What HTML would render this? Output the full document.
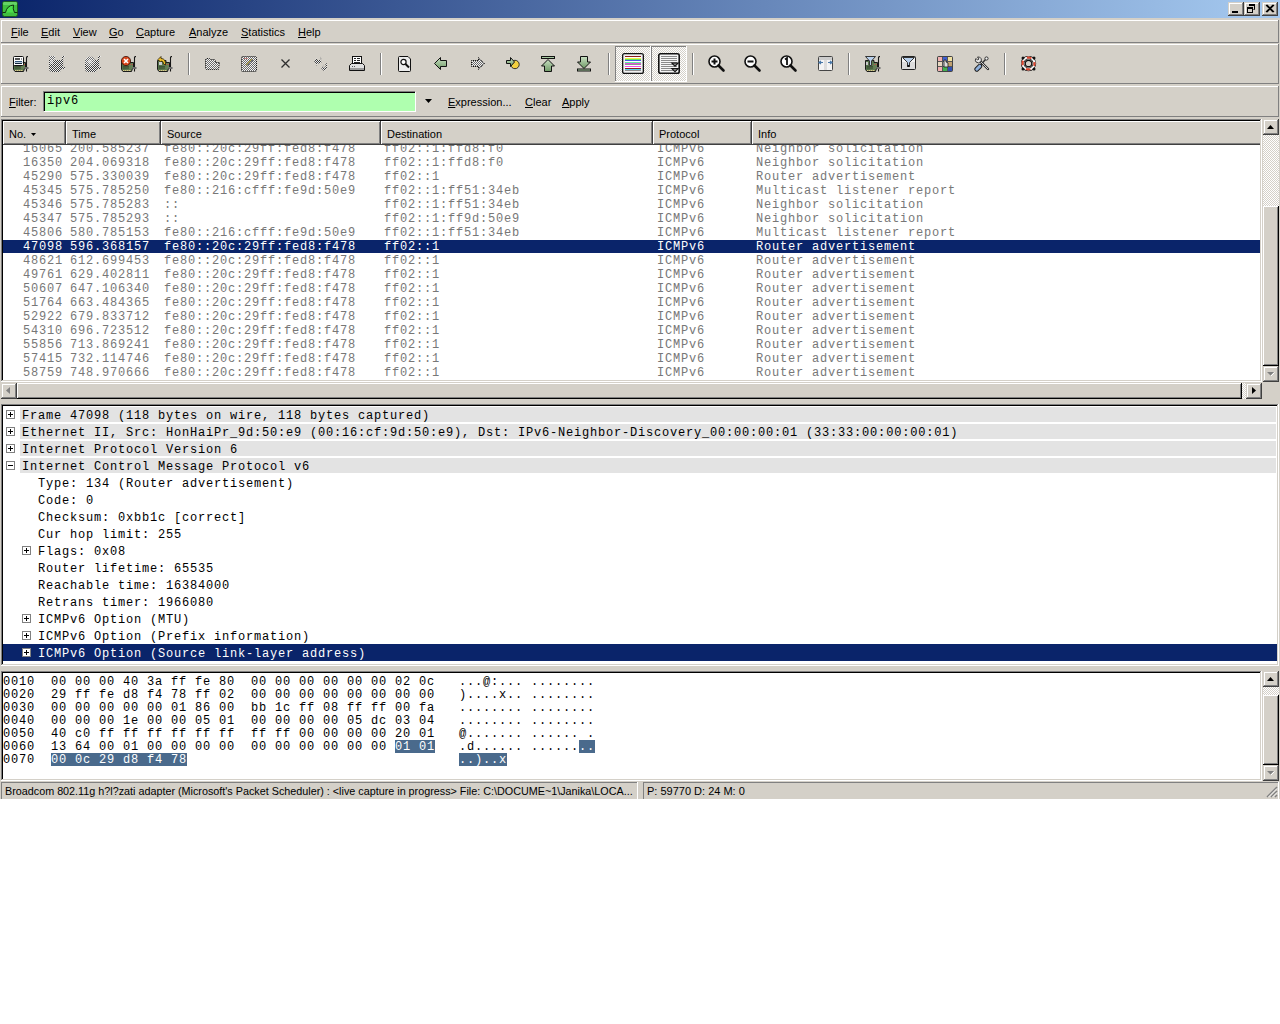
<!DOCTYPE html><html><head><meta charset="utf-8"><style>
*{margin:0;padding:0;box-sizing:border-box}
html,body{width:1280px;height:1024px;background:#fff;overflow:hidden;position:relative;font-family:"Liberation Sans",sans-serif;font-size:11px;color:#000}
div,span,svg{position:absolute}
.m{font-family:"Liberation Mono",monospace;font-size:12px;letter-spacing:0.8px;white-space:pre;line-height:14px}
.s{font-family:"Liberation Sans",sans-serif;font-size:11px;white-space:pre;line-height:13px}
.u{text-decoration:underline}
</style></head><body>
<div style="left:0px;top:18px;width:1280px;height:781px;background:#d4d0c8;"></div>
<div style="left:0px;top:0px;width:1280px;height:18px;background:linear-gradient(to right,#0a246a,#a6caf0);"></div>
<svg style="left:2px;top:1px" width="16" height="16" viewBox="0 0 16 16">
<rect x="0.5" y="0.5" width="15" height="15" rx="2" fill="#3fbf3f" stroke="#1d5a1d"/>
<rect x="1" y="1" width="14" height="3" rx="1" fill="#7fdf7f" opacity="0.6"/>
<path d="M0.5 11.5 H3.5 Q5 4.5 11.5 4 Q10.5 8 12.5 11.5 H15.5" fill="#4ae04a" stroke="#103010" stroke-width="1"/>
</svg>
<div style="left:1228px;top:2px;width:16px;height:14px;background:#d4d0c8;"></div>
<div style="left:1229px;top:3px;width:14px;height:1px;background:#fff;"></div>
<div style="left:1229px;top:3px;width:1px;height:12px;background:#fff;"></div>
<div style="left:1228px;top:15px;width:16px;height:1px;background:#404040;"></div>
<div style="left:1243px;top:2px;width:1px;height:14px;background:#404040;"></div>
<div style="left:1229px;top:14px;width:14px;height:1px;background:#808080;"></div>
<div style="left:1242px;top:3px;width:1px;height:12px;background:#808080;"></div>
<div style="left:1244px;top:2px;width:16px;height:14px;background:#d4d0c8;"></div>
<div style="left:1245px;top:3px;width:14px;height:1px;background:#fff;"></div>
<div style="left:1245px;top:3px;width:1px;height:12px;background:#fff;"></div>
<div style="left:1244px;top:15px;width:16px;height:1px;background:#404040;"></div>
<div style="left:1259px;top:2px;width:1px;height:14px;background:#404040;"></div>
<div style="left:1245px;top:14px;width:14px;height:1px;background:#808080;"></div>
<div style="left:1258px;top:3px;width:1px;height:12px;background:#808080;"></div>
<div style="left:1262px;top:2px;width:16px;height:14px;background:#d4d0c8;"></div>
<div style="left:1263px;top:3px;width:14px;height:1px;background:#fff;"></div>
<div style="left:1263px;top:3px;width:1px;height:12px;background:#fff;"></div>
<div style="left:1262px;top:15px;width:16px;height:1px;background:#404040;"></div>
<div style="left:1277px;top:2px;width:1px;height:14px;background:#404040;"></div>
<div style="left:1263px;top:14px;width:14px;height:1px;background:#808080;"></div>
<div style="left:1276px;top:3px;width:1px;height:12px;background:#808080;"></div>
<svg style="left:1228px;top:2px" width="16" height="14"><rect x="4" y="9" width="6" height="2" fill="#000"/></svg>
<svg style="left:1244px;top:2px" width="16" height="14"><path d="M5.5 2.5h5v5h-1" fill="none" stroke="#000"/><rect x="5" y="2" width="6" height="2" fill="#000"/><rect x="3.5" y="5.5" width="5" height="5" fill="none" stroke="#000"/><rect x="3" y="5" width="6" height="2" fill="#000"/></svg>
<svg style="left:1262px;top:2px" width="16" height="14"><path d="M4 3L11 10M5 3L12 10M11 3L4 10M12 3L5 10" stroke="#000" stroke-width="1.1"/></svg>
<div style="left:1px;top:20px;width:1278px;height:23px;background:#d4d0c8;"></div>
<div style="left:1px;top:20px;width:1278px;height:1px;background:#fff;"></div>
<div style="left:1px;top:20px;width:1px;height:23px;background:#fff;"></div>
<div style="left:1px;top:42px;width:1278px;height:1px;background:#808080;"></div>
<div style="left:1278px;top:20px;width:1px;height:23px;background:#808080;"></div>
<span class="s" style="left:11px;top:26px"><span class="u" style="position:static">F</span>ile</span>
<span class="s" style="left:41px;top:26px"><span class="u" style="position:static">E</span>dit</span>
<span class="s" style="left:73px;top:26px"><span class="u" style="position:static">V</span>iew</span>
<span class="s" style="left:109px;top:26px"><span class="u" style="position:static">G</span>o</span>
<span class="s" style="left:136px;top:26px"><span class="u" style="position:static">C</span>apture</span>
<span class="s" style="left:189px;top:26px"><span class="u" style="position:static">A</span>nalyze</span>
<span class="s" style="left:241px;top:26px"><span class="u" style="position:static">S</span>tatistics</span>
<span class="s" style="left:298px;top:26px"><span class="u" style="position:static">H</span>elp</span>
<div style="left:1px;top:44px;width:1278px;height:40px;background:#d4d0c8;"></div>
<div style="left:1px;top:44px;width:1278px;height:1px;background:#fff;"></div>
<div style="left:1px;top:44px;width:1px;height:40px;background:#fff;"></div>
<div style="left:1px;top:83px;width:1278px;height:1px;background:#808080;"></div>
<div style="left:1278px;top:44px;width:1px;height:40px;background:#808080;"></div>
<svg width="0" height="0" style="left:0;top:0"><defs>
<pattern id="dith" width="2" height="2" patternUnits="userSpaceOnUse"><rect width="2" height="2" fill="#ececec"/><rect width="1" height="1" fill="#3c3c3c"/><rect x="1" y="1" width="1" height="1" fill="#3c3c3c"/></pattern>
<pattern id="dithl" width="2" height="2" patternUnits="userSpaceOnUse"><rect width="2" height="2" fill="#f4f4f4"/><rect width="1" height="1" fill="#6a6a6a"/><rect x="1" y="1" width="1" height="1" fill="#6a6a6a"/></pattern>
<pattern id="press" width="2" height="2" patternUnits="userSpaceOnUse"><rect width="2" height="2" fill="#d4d0c8"/><rect width="1" height="1" fill="#fff"/><rect x="1" y="1" width="1" height="1" fill="#fff"/></pattern>
<linearGradient id="grn" x1="0" y1="0" x2="1" y2="0"><stop offset="0" stop-color="#4f6c45"/><stop offset="1" stop-color="#6a855a"/></linearGradient>
<linearGradient id="arr" x1="0" y1="0" x2="0" y2="1"><stop offset="0" stop-color="#c9e0c3"/><stop offset="1" stop-color="#6f9a66"/></linearGradient>
<linearGradient id="arrh" x1="0" y1="0" x2="1" y2="0"><stop offset="0" stop-color="#c9e0c3"/><stop offset="1" stop-color="#6f9a66"/></linearGradient>
<symbol id="card" viewBox="0 0 16 16">
<path d="M0.5 4.5V13.5L2 15.5H10.5L11.5 12.5H12.5V6.5H9V4.5Z" fill="url(#grn)" stroke="#1a1a1a"/>
<rect x="2" y="14" width="1.5" height="1" fill="#d8c98a"/><rect x="4" y="14" width="1.5" height="1" fill="#d8c98a"/><rect x="6" y="14" width="1.5" height="1" fill="#d8c98a"/><rect x="8" y="14" width="1.5" height="1" fill="#d8c98a"/>
<rect x="2" y="10" width="6" height="1" fill="#3e5437"/><rect x="2" y="11.5" width="6" height="1" fill="#34482f"/>
<rect x="9" y="8" width="1" height="1" fill="#c0504a"/><rect x="11" y="8" width="1" height="1" fill="#c0504a"/>
<path d="M13.5 15.5V1.5Q13.5 0.5 15 0.5" fill="none" stroke="#161616" stroke-width="1.1"/>
<rect x="11.5" y="11" width="4" height="2" fill="#6e6e6e"/>
</symbol>
<symbol id="cardsil" viewBox="0 0 16 16">
<path d="M0 4V14L2 16H11L12 13H16V11H14.2V1.2L16 1V0H13V4Z" />
</symbol>
</defs></svg>
<svg style="left:13px;top:56px" width="16" height="16" viewBox="0 0 16 16"><use href="#card" width="16" height="16"/>
<rect x="0.5" y="0.5" width="10" height="9" rx="1" fill="#fff" stroke="#111"/>
<rect x="2" y="2" width="5" height="2" fill="#555"/><rect x="8" y="2" width="1" height="2" fill="#999"/>
<rect x="2" y="5" width="7" height="1" fill="#34567a"/><rect x="2" y="7" width="7" height="1" fill="#12253a"/>
<rect x="1" y="6" width="9" height="1" fill="#b8c8d8"/></svg>
<svg style="left:49px;top:56px" width="16" height="16" viewBox="0 0 16 16"><use href="#cardsil" width="16" height="16" fill="url(#dith)"/><path d="M0 0H6V3L4 5H1Z" fill="url(#dithl)"/><rect x="1" y="4" width="3" height="4" fill="#f4f4f4" opacity="0.5"/></svg>
<svg style="left:85px;top:56px" width="16" height="16" viewBox="0 0 16 16"><use href="#cardsil" width="16" height="16" fill="url(#dith)"/><circle cx="5" cy="5.5" r="5" fill="url(#dithl)"/><circle cx="5" cy="5.5" r="2" fill="#f0f0f0" opacity="0.6"/></svg>
<svg style="left:121px;top:56px" width="16" height="16" viewBox="0 0 16 16"><use href="#card" width="16" height="16"/>
<circle cx="5" cy="5" r="4.6" fill="#d8461c" stroke="#3a1208" stroke-width="0.8"/>
<path d="M3 3L7 7M7 3L3 7" stroke="#fff" stroke-width="1.6"/>
</svg>
<svg style="left:157px;top:56px" width="16" height="16" viewBox="0 0 16 16"><use href="#card" width="16" height="16"/>
<path d="M1 3.5L4 0.5V2.5Q9 2.5 8.5 9L6.5 8Q6.5 5 4 5V6.5Z" fill="#f0bf2a" stroke="#2a2000" stroke-width="0.8"/>
<rect x="2" y="6" width="3" height="3" fill="#c8ccd0"/>
</svg>
<div style="left:188px;top:53px;width:1px;height:22px;background:#808080"></div>
<div style="left:189px;top:53px;width:1px;height:22px;background:#fff"></div>
<svg style="left:205px;top:58px" width="16" height="12" viewBox="0 0 16 12"><path d="M0.5 1.5L1.5 0.5H4.5L5.5 1.5H9.5L10.5 2.5V4.5H14.5L13.5 11.5H1.5L0.5 10.5Z" fill="url(#dithl)" stroke="#111" stroke-dasharray="1 1"/></svg>
<svg style="left:241px;top:56px" width="16" height="16" viewBox="0 0 16 16"><rect x="0.5" y="0.5" width="15" height="15" rx="1" fill="url(#dithl)" stroke="#111" stroke-dasharray="1 1"/>
<path d="M11 3L5 9" stroke="#c8b848" stroke-width="1"/><path d="M12 4L6 10" stroke="#333" stroke-width="1" stroke-dasharray="1 1"/><rect x="3" y="2" width="4" height="1" fill="#c08080"/></svg>
<svg style="left:281px;top:59px" width="9" height="9" viewBox="0 0 9 9"><path d="M0.5 0.5L8.5 8.5M8.5 0.5L0.5 8.5" stroke="#2f2f2f" stroke-width="1.3"/></svg>
<svg style="left:313px;top:56px" width="15" height="16" viewBox="0 0 15 16"><path d="M1 5L4 2V4H8L8.5 6.5L4 8V9Z" fill="url(#dith)"/><path d="M1.5 6L4 8.5L4 10Z" fill="url(#dith)"/><path d="M7 0.5L9 3L7 4Z" fill="#9a9a9a" opacity="0.6"/>
<path d="M14 12L11 15L8 12L9.5 11L11 12L13 10V6.5L14 8Z" fill="url(#dith)"/><path d="M12 7L14 9.5L13 11Z" fill="url(#dith)"/><path d="M9 11L11 8L10 12Z" fill="#9a9a9a" opacity="0.6"/></svg>
<svg style="left:349px;top:56px" width="17" height="16" viewBox="0 0 17 16"><rect x="3.5" y="0.5" width="9" height="8" fill="#fff" stroke="#111"/>
<rect x="5" y="2" width="2" height="1" fill="#222"/><rect x="8" y="2" width="3" height="1" fill="#222"/><rect x="5" y="4" width="2" height="1" fill="#222"/><rect x="8" y="4" width="3" height="1" fill="#222"/><rect x="5" y="6" width="6" height="1" fill="#222"/>
<path d="M0.5 9.5L2.5 7.5H13.5L15.5 9.5V14.5H0.5Z" fill="#e0e0e0" stroke="#111"/>
<rect x="1" y="12" width="14" height="2" fill="#9a9a9a"/><rect x="3" y="10" width="1" height="1" fill="#555"/><rect x="5" y="10" width="1" height="1" fill="#555"/></svg>
<div style="left:380px;top:53px;width:1px;height:22px;background:#808080"></div>
<div style="left:381px;top:53px;width:1px;height:22px;background:#fff"></div>
<svg style="left:398px;top:56px" width="14" height="16" viewBox="0 0 14 16"><path d="M0.5 1.5Q0.5 0.5 1.5 0.5H10L12.5 3V14.5Q12.5 15.5 11.5 15.5H1.5Q0.5 15.5 0.5 14.5Z" fill="#ececec" stroke="#111"/>
<circle cx="5.5" cy="6" r="2.6" fill="#fff" stroke="#111" stroke-width="1.2"/><path d="M7.5 8L11 11.5" stroke="#111" stroke-width="2"/></svg>
<svg style="left:434px;top:57px" width="14" height="13" viewBox="0 0 14 13"><path d="M0.5 6.5L6.5 0.5V3.5H12.5V9.5H6.5V12.5Z" fill="url(#arr)" stroke="#111"/></svg>
<svg style="left:471px;top:57px" width="14" height="13" viewBox="0 0 14 13"><path d="M13.5 6.5L7.5 0.5V3.5H0.5V9.5H7.5V12.5Z" fill="url(#dithl)" stroke="#111" stroke-dasharray="1 1"/></svg>
<svg style="left:506px;top:57px" width="14" height="13" viewBox="0 0 14 13"><circle cx="9" cy="7.5" r="4.2" fill="#f4d040" stroke="#222" stroke-width="0.9"/>
<path d="M0.5 3.5H4.5V0.5L8.5 5L4.5 9.5V6.5H0.5Z" fill="url(#arr)" stroke="#111"/></svg>
<svg style="left:541px;top:56px" width="15" height="16" viewBox="0 0 15 16"><rect x="0.5" y="0.5" width="13" height="2" fill="#a7c9a0" stroke="#111"/>
<path d="M7 3.5L13.5 10H10.5V15.5H3.5V10H0.5Z" fill="url(#arr)" stroke="#111"/></svg>
<svg style="left:577px;top:56px" width="15" height="16" viewBox="0 0 15 16"><rect x="0.5" y="13" width="13" height="2" fill="#a7c9a0" stroke="#111"/>
<path d="M7 12.5L13.5 6H10.5V0.5H3.5V6H0.5Z" fill="url(#arr)" stroke="#111"/></svg>
<div style="left:608px;top:53px;width:1px;height:22px;background:#808080"></div>
<div style="left:609px;top:53px;width:1px;height:22px;background:#fff"></div>
<svg style="left:615px;top:46px" width="36" height="36" viewBox="0 0 36 36"><rect width="36" height="36" fill="url(#press)"/><rect width="36" height="1" fill="#808080"/><rect width="1" height="36" fill="#808080"/><rect y="35" width="36" height="1" fill="#fff"/><rect x="35" width="1" height="36" fill="#fff"/></svg>
<svg style="left:651px;top:46px" width="36" height="36" viewBox="0 0 36 36"><rect width="36" height="36" fill="url(#press)"/><rect width="36" height="1" fill="#808080"/><rect width="1" height="36" fill="#808080"/><rect y="35" width="36" height="1" fill="#fff"/><rect x="35" width="1" height="36" fill="#fff"/></svg>
<svg style="left:622px;top:53px" width="22" height="21" viewBox="0 0 22 21"><rect x="0.8" y="0.8" width="20.4" height="19.4" rx="1.8" fill="#fff" stroke="#111" stroke-width="1.6"/><rect x="2" y="2" width="18" height="17" fill="none" stroke="#e4e4e4" stroke-width="1"/><rect x="3" y="3" width="16" height="1" fill="#8c1c1c"/><rect x="3" y="5" width="16" height="1" fill="#f0f040"/><rect x="3" y="6" width="16" height="1" fill="#60e060"/><rect x="3" y="7" width="16" height="1" fill="#4a5ae0"/><rect x="3" y="9" width="16" height="1" fill="#60f0a0"/><rect x="3" y="10" width="16" height="1" fill="#e050e0"/><rect x="3" y="11" width="16" height="1" fill="#909090"/><rect x="3" y="13" width="16" height="1" fill="#f050f0"/><rect x="3" y="15" width="16" height="1" fill="#8c1c1c"/><rect x="3" y="16" width="16" height="1" fill="#50d0f0"/><rect x="3" y="17" width="16" height="1" fill="#909090"/></svg>
<svg style="left:658px;top:53px" width="22" height="21" viewBox="0 0 22 21"><rect x="0.8" y="0.8" width="20.4" height="19.4" rx="1.8" fill="#f6f6f6" stroke="#111" stroke-width="1.6"/><rect x="3" y="3" width="16" height="1" fill="#8a8a8a"/><rect x="3" y="5" width="16" height="1" fill="#8a8a8a"/><rect x="3" y="7" width="16" height="1" fill="#8a8a8a"/><rect x="3" y="9" width="16" height="1" fill="#8a8a8a"/><rect x="3" y="11" width="16" height="1" fill="#8a8a8a"/><rect x="3" y="13" width="16" height="1" fill="#8a8a8a"/><rect x="3" y="15" width="16" height="1" fill="#8a8a8a"/><rect x="3" y="17" width="16" height="1" fill="#8a8a8a"/><path d="M12.5 9.5H21.5L17 14Z" fill="#111"/><path d="M12.5 15H21.5L17 19.5Z" fill="#111"/><path d="M15 10.5H19L17 12.5Z" fill="#888"/><path d="M15 16H19L17 18Z" fill="#888"/></svg>
<div style="left:692px;top:53px;width:1px;height:22px;background:#808080"></div>
<div style="left:693px;top:53px;width:1px;height:22px;background:#fff"></div>
<svg style="left:708px;top:55px" width="18" height="18" viewBox="0 0 18 18"><circle cx="6.5" cy="6.5" r="5.5" fill="#fff" stroke="#111" stroke-width="1.6"/>
<path d="M10.5 10.5L15.5 15.5" stroke="#111" stroke-width="2.6" stroke-linecap="round"/><path d="M6.5 3.5V9.5M3.5 6.5H9.5" stroke="#111" stroke-width="2"/></svg>
<svg style="left:744px;top:55px" width="18" height="18" viewBox="0 0 18 18"><circle cx="6.5" cy="6.5" r="5.5" fill="#fff" stroke="#111" stroke-width="1.6"/>
<path d="M10.5 10.5L15.5 15.5" stroke="#111" stroke-width="2.6" stroke-linecap="round"/><path d="M3.5 6.5H9.5" stroke="#111" stroke-width="2"/></svg>
<svg style="left:780px;top:55px" width="18" height="18" viewBox="0 0 18 18"><circle cx="6.5" cy="6.5" r="5.5" fill="#fff" stroke="#111" stroke-width="1.6"/>
<path d="M10.5 10.5L15.5 15.5" stroke="#111" stroke-width="2.6" stroke-linecap="round"/><path d="M5 4.5L7 3V10" fill="none" stroke="#111" stroke-width="1.8"/></svg>
<svg style="left:818px;top:56px" width="15" height="15" viewBox="0 0 15 15"><rect x="0.5" y="0.5" width="14" height="14" rx="1" fill="#f4f4f4" stroke="#444"/>
<rect x="1" y="1" width="13" height="3" fill="#ccc"/><rect x="6" y="4" width="3" height="10" fill="#ddd"/>
<path d="M1 6.5H5M3 5L1 6.5L3 8M10 6.5H14M12 5L14 6.5L12 8" stroke="#4a78a8" stroke-width="1.2" fill="none"/></svg>
<div style="left:848px;top:53px;width:1px;height:22px;background:#808080"></div>
<div style="left:849px;top:53px;width:1px;height:22px;background:#fff"></div>
<svg style="left:865px;top:56px" width="16" height="16" viewBox="0 0 16 16"><use href="#card" width="16" height="16"/>
<path d="M0.5 0.5H10.5L6.5 5V9.5H4.5V5Z" fill="#b8d0ec" stroke="#333"/>
<rect x="1" y="6" width="2" height="3" fill="#c8c8c8"/></svg>
<svg style="left:901px;top:56px" width="15" height="15" viewBox="0 0 15 15"><rect x="0.5" y="0.5" width="14" height="13" rx="1" fill="#dcdcdc" stroke="#222"/>
<rect x="1" y="1" width="13" height="5" fill="#f4f4f4"/>
<path d="M1.5 1.5H13.5L8.5 6.5V10.5H6.5V6.5Z" fill="#b8d0ec" stroke="#333"/><rect x="6.5" y="9" width="2" height="2" fill="#111"/></svg>
<svg style="left:937px;top:56px" width="16" height="16" viewBox="0 0 16 16"><rect x="0.5" y="0.5" width="15" height="15" rx="1" fill="#555" stroke="#444"/>
<rect x="1" y="1" width="4" height="4" fill="#f0b0b0"/><rect x="6" y="1" width="4" height="4" fill="#4060d0"/><rect x="11" y="1" width="4" height="4" fill="#f0e0a0"/>
<rect x="1" y="6" width="4" height="4" fill="#e8d8c0"/><rect x="6" y="6" width="4" height="4" fill="#c0c0c0"/><rect x="11" y="6" width="4" height="4" fill="#c0a070"/>
<rect x="1" y="11" width="4" height="4" fill="#f0b0b0"/><rect x="6" y="11" width="4" height="4" fill="#40b050"/><rect x="11" y="11" width="4" height="4" fill="#3050b0"/>
<path d="M7 4V11H11V7L9 6V4Z" fill="#ddd" stroke="#222" stroke-width="0.8"/></svg>
<svg style="left:974px;top:56px" width="16" height="16" viewBox="0 0 16 16"><path d="M6 9.5L11.5 3.5" stroke="#333" stroke-width="1.4"/><circle cx="12.5" cy="2.5" r="1.6" fill="#eee" stroke="#333" stroke-width="1"/>
<path d="M14 13L6 5" stroke="#2a2a2a" stroke-width="2.4" stroke-linecap="round"/><path d="M14 13L6 5" stroke="#e0e0e0" stroke-width="0.9"/>
<path d="M7 5.5Q4.5 8 2 6Q0.5 4 2 2.5L3.5 4L5 3L3.5 1Q6 0.5 7 2.5Q7.8 4 7 5.5Z" fill="#e8e8e8" stroke="#2a2a2a" stroke-width="0.9"/>
<path d="M2.8 13.2L5.8 10.2" stroke="#1a1a1a" stroke-width="4.8" stroke-linecap="round"/><path d="M2.8 13.2L5.8 10.2" stroke="#8fb0dc" stroke-width="3" stroke-linecap="round"/></svg>
<div style="left:1004px;top:53px;width:1px;height:22px;background:#808080"></div>
<div style="left:1005px;top:53px;width:1px;height:22px;background:#fff"></div>
<svg style="left:1021px;top:56px" width="16" height="16" viewBox="0 0 16 16"><circle cx="7.5" cy="7.5" r="6" fill="none" stroke="#111" stroke-width="3.4"/>
<circle cx="7.5" cy="7.5" r="6" fill="none" stroke="#fff" stroke-width="2"/>
<circle cx="7.5" cy="7.5" r="6" fill="none" stroke="#e04830" stroke-width="2" stroke-dasharray="4.7 4.7" stroke-dashoffset="2.3"/>
<circle cx="7.5" cy="7.5" r="3.2" fill="none" stroke="#111" stroke-width="1.2"/>
<circle cx="2" cy="2" r="1.5" fill="#111"/><circle cx="13" cy="2" r="1.5" fill="#111"/><circle cx="2" cy="13" r="1.5" fill="#111"/><circle cx="13" cy="13" r="1.5" fill="#111"/></svg>
<div style="left:1px;top:86px;width:1278px;height:31px;background:#d4d0c8;"></div>
<div style="left:1px;top:86px;width:1278px;height:1px;background:#fff;"></div>
<div style="left:1px;top:86px;width:1px;height:31px;background:#fff;"></div>
<div style="left:1px;top:116px;width:1278px;height:1px;background:#808080;"></div>
<div style="left:1278px;top:86px;width:1px;height:31px;background:#808080;"></div>
<span class="s" style="left:9px;top:96px"><span class="u" style="position:static">F</span>ilter:</span>
<div style="left:43px;top:91px;width:373px;height:21px;background:#d4d0c8;"></div>
<div style="left:43px;top:91px;width:372px;height:1px;background:#808080;"></div>
<div style="left:43px;top:91px;width:1px;height:20px;background:#808080;"></div>
<div style="left:44px;top:92px;width:371px;height:1px;background:#000;"></div>
<div style="left:44px;top:92px;width:1px;height:19px;background:#000;"></div>
<div style="left:45px;top:93px;width:370px;height:18px;background:#afffaf;"></div>
<div style="left:44px;top:111px;width:372px;height:1px;background:#fff;"></div>
<div style="left:415px;top:92px;width:1px;height:20px;background:#fff;"></div>
<span class="m" style="left:47px;top:94px;color:#000;">ipv6</span>
<svg style="left:425px;top:99px" width="7" height="4"><path d="M0 0H7L3.5 4Z" fill="#000"/></svg>
<span class="s" style="left:448px;top:96px"><span class="u" style="position:static">E</span>xpression...</span>
<span class="s" style="left:525px;top:96px"><span class="u" style="position:static">C</span>lear</span>
<span class="s" style="left:562px;top:96px"><span class="u" style="position:static">A</span>pply</span>
<div style="left:1px;top:119px;width:1261px;height:263px;background:#fff;"></div>
<div style="left:1px;top:119px;width:1261px;height:1px;background:#808080;"></div>
<div style="left:1px;top:119px;width:1px;height:263px;background:#808080;"></div>
<div style="left:2px;top:120px;width:1259px;height:1px;background:#000;"></div>
<div style="left:2px;top:120px;width:1px;height:261px;background:#000;"></div>
<div style="left:1px;top:381px;width:1261px;height:1px;background:#fff;"></div>
<div style="left:1261px;top:119px;width:1px;height:263px;background:#fff;"></div>
<div style="left:2px;top:380px;width:1259px;height:1px;background:#d4d0c8;"></div>
<div style="left:1260px;top:120px;width:1px;height:261px;background:#d4d0c8;"></div>
<div style="left:3px;top:121px;width:63px;height:24px;background:#d4d0c8;"></div>
<div style="left:3px;top:121px;width:63px;height:1px;background:#fff;"></div>
<div style="left:3px;top:121px;width:1px;height:24px;background:#fff;"></div>
<div style="left:3px;top:144px;width:63px;height:1px;background:#404040;"></div>
<div style="left:65px;top:121px;width:1px;height:24px;background:#404040;"></div>
<div style="left:4px;top:143px;width:61px;height:1px;background:#808080;"></div>
<div style="left:64px;top:122px;width:1px;height:22px;background:#808080;"></div>
<div style="left:66px;top:121px;width:95px;height:24px;background:#d4d0c8;"></div>
<div style="left:66px;top:121px;width:95px;height:1px;background:#fff;"></div>
<div style="left:66px;top:121px;width:1px;height:24px;background:#fff;"></div>
<div style="left:66px;top:144px;width:95px;height:1px;background:#404040;"></div>
<div style="left:160px;top:121px;width:1px;height:24px;background:#404040;"></div>
<div style="left:67px;top:143px;width:93px;height:1px;background:#808080;"></div>
<div style="left:159px;top:122px;width:1px;height:22px;background:#808080;"></div>
<div style="left:161px;top:121px;width:220px;height:24px;background:#d4d0c8;"></div>
<div style="left:161px;top:121px;width:220px;height:1px;background:#fff;"></div>
<div style="left:161px;top:121px;width:1px;height:24px;background:#fff;"></div>
<div style="left:161px;top:144px;width:220px;height:1px;background:#404040;"></div>
<div style="left:380px;top:121px;width:1px;height:24px;background:#404040;"></div>
<div style="left:162px;top:143px;width:218px;height:1px;background:#808080;"></div>
<div style="left:379px;top:122px;width:1px;height:22px;background:#808080;"></div>
<div style="left:381px;top:121px;width:272px;height:24px;background:#d4d0c8;"></div>
<div style="left:381px;top:121px;width:272px;height:1px;background:#fff;"></div>
<div style="left:381px;top:121px;width:1px;height:24px;background:#fff;"></div>
<div style="left:381px;top:144px;width:272px;height:1px;background:#404040;"></div>
<div style="left:652px;top:121px;width:1px;height:24px;background:#404040;"></div>
<div style="left:382px;top:143px;width:270px;height:1px;background:#808080;"></div>
<div style="left:651px;top:122px;width:1px;height:22px;background:#808080;"></div>
<div style="left:653px;top:121px;width:99px;height:24px;background:#d4d0c8;"></div>
<div style="left:653px;top:121px;width:99px;height:1px;background:#fff;"></div>
<div style="left:653px;top:121px;width:1px;height:24px;background:#fff;"></div>
<div style="left:653px;top:144px;width:99px;height:1px;background:#404040;"></div>
<div style="left:751px;top:121px;width:1px;height:24px;background:#404040;"></div>
<div style="left:654px;top:143px;width:97px;height:1px;background:#808080;"></div>
<div style="left:750px;top:122px;width:1px;height:22px;background:#808080;"></div>
<div style="left:752px;top:121px;width:508px;height:24px;overflow:hidden">

<div style="left:0px;top:0px;width:520px;height:24px;background:#d4d0c8;"></div>
<div style="left:0px;top:0px;width:520px;height:1px;background:#fff;"></div>
<div style="left:0px;top:0px;width:1px;height:24px;background:#fff;"></div>
<div style="left:0px;top:23px;width:520px;height:1px;background:#404040;"></div>
<div style="left:1px;top:22px;width:519px;height:1px;background:#808080;"></div>
</div>
<span class="s" style="left:9px;top:128px;color:#000;">No.</span>
<span class="s" style="left:72px;top:128px;color:#000;">Time</span>
<span class="s" style="left:167px;top:128px;color:#000;">Source</span>
<span class="s" style="left:387px;top:128px;color:#000;">Destination</span>
<span class="s" style="left:659px;top:128px;color:#000;">Protocol</span>
<span class="s" style="left:758px;top:128px;color:#000;">Info</span>
<svg style="left:31px;top:133px" width="5" height="3"><path d="M0 0H5L2.5 3Z" fill="#000"/></svg>
<div style="left:3px;top:145px;width:1257px;height:235px;overflow:hidden">
<span class="m" style="left:20px;top:-3px;color:#777;">16065</span>
<span class="m" style="left:67px;top:-3px;color:#777;">200.585237</span>
<span class="m" style="left:161px;top:-3px;color:#777;">fe80::20c:29ff:fed8:f478</span>
<span class="m" style="left:381px;top:-3px;color:#777;">ff02::1:ffd8:f0</span>
<span class="m" style="left:654px;top:-3px;color:#777;">ICMPv6</span>
<span class="m" style="left:753px;top:-3px;color:#777;">Neighbor solicitation</span>
<span class="m" style="left:20px;top:11px;color:#777;">16350</span>
<span class="m" style="left:67px;top:11px;color:#777;">204.069318</span>
<span class="m" style="left:161px;top:11px;color:#777;">fe80::20c:29ff:fed8:f478</span>
<span class="m" style="left:381px;top:11px;color:#777;">ff02::1:ffd8:f0</span>
<span class="m" style="left:654px;top:11px;color:#777;">ICMPv6</span>
<span class="m" style="left:753px;top:11px;color:#777;">Neighbor solicitation</span>
<span class="m" style="left:20px;top:25px;color:#777;">45290</span>
<span class="m" style="left:67px;top:25px;color:#777;">575.330039</span>
<span class="m" style="left:161px;top:25px;color:#777;">fe80::20c:29ff:fed8:f478</span>
<span class="m" style="left:381px;top:25px;color:#777;">ff02::1</span>
<span class="m" style="left:654px;top:25px;color:#777;">ICMPv6</span>
<span class="m" style="left:753px;top:25px;color:#777;">Router advertisement</span>
<span class="m" style="left:20px;top:39px;color:#777;">45345</span>
<span class="m" style="left:67px;top:39px;color:#777;">575.785250</span>
<span class="m" style="left:161px;top:39px;color:#777;">fe80::216:cfff:fe9d:50e9</span>
<span class="m" style="left:381px;top:39px;color:#777;">ff02::1:ff51:34eb</span>
<span class="m" style="left:654px;top:39px;color:#777;">ICMPv6</span>
<span class="m" style="left:753px;top:39px;color:#777;">Multicast listener report</span>
<span class="m" style="left:20px;top:53px;color:#777;">45346</span>
<span class="m" style="left:67px;top:53px;color:#777;">575.785283</span>
<span class="m" style="left:161px;top:53px;color:#777;">::</span>
<span class="m" style="left:381px;top:53px;color:#777;">ff02::1:ff51:34eb</span>
<span class="m" style="left:654px;top:53px;color:#777;">ICMPv6</span>
<span class="m" style="left:753px;top:53px;color:#777;">Neighbor solicitation</span>
<span class="m" style="left:20px;top:67px;color:#777;">45347</span>
<span class="m" style="left:67px;top:67px;color:#777;">575.785293</span>
<span class="m" style="left:161px;top:67px;color:#777;">::</span>
<span class="m" style="left:381px;top:67px;color:#777;">ff02::1:ff9d:50e9</span>
<span class="m" style="left:654px;top:67px;color:#777;">ICMPv6</span>
<span class="m" style="left:753px;top:67px;color:#777;">Neighbor solicitation</span>
<span class="m" style="left:20px;top:81px;color:#777;">45806</span>
<span class="m" style="left:67px;top:81px;color:#777;">580.785153</span>
<span class="m" style="left:161px;top:81px;color:#777;">fe80::216:cfff:fe9d:50e9</span>
<span class="m" style="left:381px;top:81px;color:#777;">ff02::1:ff51:34eb</span>
<span class="m" style="left:654px;top:81px;color:#777;">ICMPv6</span>
<span class="m" style="left:753px;top:81px;color:#777;">Multicast listener report</span>
<div style="left:0px;top:95px;width:1257px;height:13px;background:#0a246a;"></div>
<span class="m" style="left:20px;top:95px;color:#fff;">47098</span>
<span class="m" style="left:67px;top:95px;color:#fff;">596.368157</span>
<span class="m" style="left:161px;top:95px;color:#fff;">fe80::20c:29ff:fed8:f478</span>
<span class="m" style="left:381px;top:95px;color:#fff;">ff02::1</span>
<span class="m" style="left:654px;top:95px;color:#fff;">ICMPv6</span>
<span class="m" style="left:753px;top:95px;color:#fff;">Router advertisement</span>
<span class="m" style="left:20px;top:109px;color:#777;">48621</span>
<span class="m" style="left:67px;top:109px;color:#777;">612.699453</span>
<span class="m" style="left:161px;top:109px;color:#777;">fe80::20c:29ff:fed8:f478</span>
<span class="m" style="left:381px;top:109px;color:#777;">ff02::1</span>
<span class="m" style="left:654px;top:109px;color:#777;">ICMPv6</span>
<span class="m" style="left:753px;top:109px;color:#777;">Router advertisement</span>
<span class="m" style="left:20px;top:123px;color:#777;">49761</span>
<span class="m" style="left:67px;top:123px;color:#777;">629.402811</span>
<span class="m" style="left:161px;top:123px;color:#777;">fe80::20c:29ff:fed8:f478</span>
<span class="m" style="left:381px;top:123px;color:#777;">ff02::1</span>
<span class="m" style="left:654px;top:123px;color:#777;">ICMPv6</span>
<span class="m" style="left:753px;top:123px;color:#777;">Router advertisement</span>
<span class="m" style="left:20px;top:137px;color:#777;">50607</span>
<span class="m" style="left:67px;top:137px;color:#777;">647.106340</span>
<span class="m" style="left:161px;top:137px;color:#777;">fe80::20c:29ff:fed8:f478</span>
<span class="m" style="left:381px;top:137px;color:#777;">ff02::1</span>
<span class="m" style="left:654px;top:137px;color:#777;">ICMPv6</span>
<span class="m" style="left:753px;top:137px;color:#777;">Router advertisement</span>
<span class="m" style="left:20px;top:151px;color:#777;">51764</span>
<span class="m" style="left:67px;top:151px;color:#777;">663.484365</span>
<span class="m" style="left:161px;top:151px;color:#777;">fe80::20c:29ff:fed8:f478</span>
<span class="m" style="left:381px;top:151px;color:#777;">ff02::1</span>
<span class="m" style="left:654px;top:151px;color:#777;">ICMPv6</span>
<span class="m" style="left:753px;top:151px;color:#777;">Router advertisement</span>
<span class="m" style="left:20px;top:165px;color:#777;">52922</span>
<span class="m" style="left:67px;top:165px;color:#777;">679.833712</span>
<span class="m" style="left:161px;top:165px;color:#777;">fe80::20c:29ff:fed8:f478</span>
<span class="m" style="left:381px;top:165px;color:#777;">ff02::1</span>
<span class="m" style="left:654px;top:165px;color:#777;">ICMPv6</span>
<span class="m" style="left:753px;top:165px;color:#777;">Router advertisement</span>
<span class="m" style="left:20px;top:179px;color:#777;">54310</span>
<span class="m" style="left:67px;top:179px;color:#777;">696.723512</span>
<span class="m" style="left:161px;top:179px;color:#777;">fe80::20c:29ff:fed8:f478</span>
<span class="m" style="left:381px;top:179px;color:#777;">ff02::1</span>
<span class="m" style="left:654px;top:179px;color:#777;">ICMPv6</span>
<span class="m" style="left:753px;top:179px;color:#777;">Router advertisement</span>
<span class="m" style="left:20px;top:193px;color:#777;">55856</span>
<span class="m" style="left:67px;top:193px;color:#777;">713.869241</span>
<span class="m" style="left:161px;top:193px;color:#777;">fe80::20c:29ff:fed8:f478</span>
<span class="m" style="left:381px;top:193px;color:#777;">ff02::1</span>
<span class="m" style="left:654px;top:193px;color:#777;">ICMPv6</span>
<span class="m" style="left:753px;top:193px;color:#777;">Router advertisement</span>
<span class="m" style="left:20px;top:207px;color:#777;">57415</span>
<span class="m" style="left:67px;top:207px;color:#777;">732.114746</span>
<span class="m" style="left:161px;top:207px;color:#777;">fe80::20c:29ff:fed8:f478</span>
<span class="m" style="left:381px;top:207px;color:#777;">ff02::1</span>
<span class="m" style="left:654px;top:207px;color:#777;">ICMPv6</span>
<span class="m" style="left:753px;top:207px;color:#777;">Router advertisement</span>
<span class="m" style="left:20px;top:221px;color:#777;">58759</span>
<span class="m" style="left:67px;top:221px;color:#777;">748.970666</span>
<span class="m" style="left:161px;top:221px;color:#777;">fe80::20c:29ff:fed8:f478</span>
<span class="m" style="left:381px;top:221px;color:#777;">ff02::1</span>
<span class="m" style="left:654px;top:221px;color:#777;">ICMPv6</span>
<span class="m" style="left:753px;top:221px;color:#777;">Router advertisement</span>
</div>
<div style="left:1263px;top:119px;width:16px;height:263px;background:repeating-conic-gradient(#fff 0 25%,#d4d0c8 0 50%) 0 0/2px 2px;"></div>
<div style="left:1263px;top:119px;width:16px;height:16px;background:#d4d0c8;"></div>
<div style="left:1264px;top:120px;width:14px;height:1px;background:#fff;"></div>
<div style="left:1264px;top:120px;width:1px;height:14px;background:#fff;"></div>
<div style="left:1263px;top:134px;width:16px;height:1px;background:#404040;"></div>
<div style="left:1278px;top:119px;width:1px;height:16px;background:#404040;"></div>
<div style="left:1264px;top:133px;width:14px;height:1px;background:#808080;"></div>
<div style="left:1277px;top:120px;width:1px;height:14px;background:#808080;"></div>
<svg style="left:1267px;top:125px" width="7" height="4"><path d="M3.5 0L7 4H0Z" fill="#000"/></svg>
<div style="left:1263px;top:206px;width:16px;height:160px;background:#d4d0c8;"></div>
<div style="left:1263px;top:206px;width:16px;height:1px;background:#fff;"></div>
<div style="left:1263px;top:206px;width:1px;height:160px;background:#fff;"></div>
<div style="left:1263px;top:365px;width:16px;height:1px;background:#000;"></div>
<div style="left:1278px;top:206px;width:1px;height:160px;background:#000;"></div>
<div style="left:1264px;top:364px;width:14px;height:1px;background:#808080;"></div>
<div style="left:1277px;top:207px;width:1px;height:158px;background:#808080;"></div>
<div style="left:1263px;top:366px;width:16px;height:16px;background:#d4d0c8;"></div>
<div style="left:1264px;top:367px;width:14px;height:1px;background:#fff;"></div>
<div style="left:1264px;top:367px;width:1px;height:14px;background:#fff;"></div>
<div style="left:1263px;top:381px;width:16px;height:1px;background:#404040;"></div>
<div style="left:1278px;top:366px;width:1px;height:16px;background:#404040;"></div>
<div style="left:1264px;top:380px;width:14px;height:1px;background:#808080;"></div>
<div style="left:1277px;top:367px;width:1px;height:14px;background:#808080;"></div>
<svg style="left:1267px;top:372px" width="8" height="5"><path d="M0 0H7L3.5 3.5Z" fill="#808080"/><path d="M4 4L7.5 0.5" stroke="#fff" stroke-width="1"/></svg>
<div style="left:1px;top:383px;width:1261px;height:16px;background:repeating-conic-gradient(#fff 0 25%,#d4d0c8 0 50%) 0 0/2px 2px;"></div>
<div style="left:1px;top:383px;width:16px;height:16px;background:#d4d0c8;"></div>
<div style="left:2px;top:384px;width:14px;height:1px;background:#fff;"></div>
<div style="left:2px;top:384px;width:1px;height:14px;background:#fff;"></div>
<div style="left:1px;top:398px;width:16px;height:1px;background:#404040;"></div>
<div style="left:16px;top:383px;width:1px;height:16px;background:#404040;"></div>
<div style="left:2px;top:397px;width:14px;height:1px;background:#808080;"></div>
<div style="left:15px;top:384px;width:1px;height:14px;background:#808080;"></div>
<svg style="left:6px;top:387px" width="4" height="7"><path d="M0 3.5L4 0V7Z" fill="#808080"/></svg>
<div style="left:17px;top:383px;width:1225px;height:16px;background:#d4d0c8;"></div>
<div style="left:17px;top:383px;width:1225px;height:1px;background:#fff;"></div>
<div style="left:17px;top:383px;width:1px;height:16px;background:#fff;"></div>
<div style="left:17px;top:398px;width:1225px;height:1px;background:#000;"></div>
<div style="left:1241px;top:383px;width:1px;height:16px;background:#000;"></div>
<div style="left:18px;top:397px;width:1223px;height:1px;background:#808080;"></div>
<div style="left:1240px;top:384px;width:1px;height:14px;background:#808080;"></div>
<div style="left:1246px;top:383px;width:16px;height:16px;background:#d4d0c8;"></div>
<div style="left:1247px;top:384px;width:14px;height:1px;background:#fff;"></div>
<div style="left:1247px;top:384px;width:1px;height:14px;background:#fff;"></div>
<div style="left:1246px;top:398px;width:16px;height:1px;background:#404040;"></div>
<div style="left:1261px;top:383px;width:1px;height:16px;background:#404040;"></div>
<div style="left:1247px;top:397px;width:14px;height:1px;background:#808080;"></div>
<div style="left:1260px;top:384px;width:1px;height:14px;background:#808080;"></div>
<svg style="left:1252px;top:387px" width="4" height="7"><path d="M0 0L4 3.5L0 7Z" fill="#000"/></svg>
<div style="left:1px;top:404px;width:1278px;height:262px;background:#fff;"></div>
<div style="left:1px;top:404px;width:1278px;height:1px;background:#808080;"></div>
<div style="left:1px;top:404px;width:1px;height:262px;background:#808080;"></div>
<div style="left:2px;top:405px;width:1276px;height:1px;background:#000;"></div>
<div style="left:2px;top:405px;width:1px;height:260px;background:#000;"></div>
<div style="left:1px;top:665px;width:1278px;height:1px;background:#fff;"></div>
<div style="left:1278px;top:404px;width:1px;height:262px;background:#fff;"></div>
<div style="left:2px;top:664px;width:1276px;height:1px;background:#d4d0c8;"></div>
<div style="left:1277px;top:405px;width:1px;height:260px;background:#d4d0c8;"></div>
<div style="left:20px;top:407px;width:1256px;height:15px;background:#e3e3e3;"></div>
<div style="left:6px;top:410px;width:9px;height:9px;background:#808080;"></div>
<div style="left:7px;top:411px;width:7px;height:7px;background:#fff;"></div>
<div style="left:8px;top:414px;width:5px;height:1px;background:#000;"></div>
<div style="left:10px;top:412px;width:1px;height:5px;background:#000;"></div>
<span class="m" style="left:22px;top:409px;color:#000;">Frame 47098 (118 bytes on wire, 118 bytes captured)</span>
<div style="left:20px;top:424px;width:1256px;height:15px;background:#e3e3e3;"></div>
<div style="left:6px;top:427px;width:9px;height:9px;background:#808080;"></div>
<div style="left:7px;top:428px;width:7px;height:7px;background:#fff;"></div>
<div style="left:8px;top:431px;width:5px;height:1px;background:#000;"></div>
<div style="left:10px;top:429px;width:1px;height:5px;background:#000;"></div>
<span class="m" style="left:22px;top:426px;color:#000;">Ethernet II, Src: HonHaiPr_9d:50:e9 (00:16:cf:9d:50:e9), Dst: IPv6-Neighbor-Discovery_00:00:00:01 (33:33:00:00:00:01)</span>
<div style="left:20px;top:441px;width:1256px;height:15px;background:#e3e3e3;"></div>
<div style="left:6px;top:444px;width:9px;height:9px;background:#808080;"></div>
<div style="left:7px;top:445px;width:7px;height:7px;background:#fff;"></div>
<div style="left:8px;top:448px;width:5px;height:1px;background:#000;"></div>
<div style="left:10px;top:446px;width:1px;height:5px;background:#000;"></div>
<span class="m" style="left:22px;top:443px;color:#000;">Internet Protocol Version 6</span>
<div style="left:20px;top:458px;width:1256px;height:15px;background:#e3e3e3;"></div>
<div style="left:6px;top:461px;width:9px;height:9px;background:#808080;"></div>
<div style="left:7px;top:462px;width:7px;height:7px;background:#fff;"></div>
<div style="left:8px;top:465px;width:5px;height:1px;background:#000;"></div>
<span class="m" style="left:22px;top:460px;color:#000;">Internet Control Message Protocol v6</span>
<span class="m" style="left:38px;top:477px;color:#000;">Type: 134 (Router advertisement)</span>
<span class="m" style="left:38px;top:494px;color:#000;">Code: 0</span>
<span class="m" style="left:38px;top:511px;color:#000;">Checksum: 0xbb1c [correct]</span>
<span class="m" style="left:38px;top:528px;color:#000;">Cur hop limit: 255</span>
<div style="left:22px;top:546px;width:9px;height:9px;background:#808080;"></div>
<div style="left:23px;top:547px;width:7px;height:7px;background:#fff;"></div>
<div style="left:24px;top:550px;width:5px;height:1px;background:#000;"></div>
<div style="left:26px;top:548px;width:1px;height:5px;background:#000;"></div>
<span class="m" style="left:38px;top:545px;color:#000;">Flags: 0x08</span>
<span class="m" style="left:38px;top:562px;color:#000;">Router lifetime: 65535</span>
<span class="m" style="left:38px;top:579px;color:#000;">Reachable time: 16384000</span>
<span class="m" style="left:38px;top:596px;color:#000;">Retrans timer: 1966080</span>
<div style="left:22px;top:614px;width:9px;height:9px;background:#808080;"></div>
<div style="left:23px;top:615px;width:7px;height:7px;background:#fff;"></div>
<div style="left:24px;top:618px;width:5px;height:1px;background:#000;"></div>
<div style="left:26px;top:616px;width:1px;height:5px;background:#000;"></div>
<span class="m" style="left:38px;top:613px;color:#000;">ICMPv6 Option (MTU)</span>
<div style="left:22px;top:631px;width:9px;height:9px;background:#808080;"></div>
<div style="left:23px;top:632px;width:7px;height:7px;background:#fff;"></div>
<div style="left:24px;top:635px;width:5px;height:1px;background:#000;"></div>
<div style="left:26px;top:633px;width:1px;height:5px;background:#000;"></div>
<span class="m" style="left:38px;top:630px;color:#000;">ICMPv6 Option (Prefix information)</span>
<div style="left:3px;top:644px;width:1274px;height:17px;background:#0a246a;"></div>
<div style="left:22px;top:648px;width:9px;height:9px;background:#808080;"></div>
<div style="left:23px;top:649px;width:7px;height:7px;background:#fff;"></div>
<div style="left:24px;top:652px;width:5px;height:1px;background:#000;"></div>
<div style="left:26px;top:650px;width:1px;height:5px;background:#000;"></div>
<span class="m" style="left:38px;top:647px;color:#fff;">ICMPv6 Option (Source link-layer address)</span>
<div style="left:1px;top:671px;width:1261px;height:110px;background:#fff;"></div>
<div style="left:1px;top:671px;width:1261px;height:1px;background:#808080;"></div>
<div style="left:1px;top:671px;width:1px;height:110px;background:#808080;"></div>
<div style="left:2px;top:672px;width:1259px;height:1px;background:#000;"></div>
<div style="left:2px;top:672px;width:1px;height:108px;background:#000;"></div>
<div style="left:1px;top:780px;width:1261px;height:1px;background:#fff;"></div>
<div style="left:1261px;top:671px;width:1px;height:110px;background:#fff;"></div>
<div style="left:2px;top:779px;width:1259px;height:1px;background:#d4d0c8;"></div>
<div style="left:1260px;top:672px;width:1px;height:108px;background:#d4d0c8;"></div>
<span class="m" style="left:3px;top:676px;color:#000;line-height:13px">0010  00 00 00 40 3a ff fe 80  00 00 00 00 00 00 02 0c   ...@:... ........</span>
<span class="m" style="left:3px;top:689px;color:#000;line-height:13px">0020  29 ff fe d8 f4 78 ff 02  00 00 00 00 00 00 00 00   )....x.. ........</span>
<span class="m" style="left:3px;top:702px;color:#000;line-height:13px">0030  00 00 00 00 00 01 86 00  bb 1c ff 08 ff ff 00 fa   ........ ........</span>
<span class="m" style="left:3px;top:715px;color:#000;line-height:13px">0040  00 00 00 1e 00 00 05 01  00 00 00 00 05 dc 03 04   ........ ........</span>
<span class="m" style="left:3px;top:728px;color:#000;line-height:13px">0050  40 c0 ff ff ff ff ff ff  ff ff 00 00 00 00 20 01   @....... ...... .</span>
<span class="m" style="left:3px;top:741px;color:#000;line-height:13px">0060  13 64 00 01 00 00 00 00  00 00 00 00 00 00 01 01   .d...... ........</span>
<span class="m" style="left:3px;top:754px;color:#000;line-height:13px">0070  00 0c 29 d8 f4 78                                  ..)..x</span>
<div style="left:395px;top:740px;width:40px;height:13px;background:#4a6a8c;"></div>
<span class="m" style="left:395px;top:741px;color:#fff;line-height:13px">01 01</span>
<div style="left:579px;top:740px;width:16px;height:13px;background:#4a6a8c;"></div>
<span class="m" style="left:579px;top:741px;color:#fff;line-height:13px">..</span>
<div style="left:51px;top:753px;width:136px;height:13px;background:#4a6a8c;"></div>
<span class="m" style="left:51px;top:754px;color:#fff;line-height:13px">00 0c 29 d8 f4 78</span>
<div style="left:459px;top:753px;width:48px;height:13px;background:#4a6a8c;"></div>
<span class="m" style="left:459px;top:754px;color:#fff;line-height:13px">..)..x</span>
<div style="left:1263px;top:671px;width:16px;height:110px;background:repeating-conic-gradient(#fff 0 25%,#d4d0c8 0 50%) 0 0/2px 2px;"></div>
<div style="left:1263px;top:671px;width:16px;height:16px;background:#d4d0c8;"></div>
<div style="left:1264px;top:672px;width:14px;height:1px;background:#fff;"></div>
<div style="left:1264px;top:672px;width:1px;height:14px;background:#fff;"></div>
<div style="left:1263px;top:686px;width:16px;height:1px;background:#404040;"></div>
<div style="left:1278px;top:671px;width:1px;height:16px;background:#404040;"></div>
<div style="left:1264px;top:685px;width:14px;height:1px;background:#808080;"></div>
<div style="left:1277px;top:672px;width:1px;height:14px;background:#808080;"></div>
<svg style="left:1267px;top:677px" width="7" height="4"><path d="M3.5 0L7 4H0Z" fill="#000"/></svg>
<div style="left:1263px;top:695px;width:16px;height:70px;background:#d4d0c8;"></div>
<div style="left:1263px;top:695px;width:16px;height:1px;background:#fff;"></div>
<div style="left:1263px;top:695px;width:1px;height:70px;background:#fff;"></div>
<div style="left:1263px;top:764px;width:16px;height:1px;background:#000;"></div>
<div style="left:1278px;top:695px;width:1px;height:70px;background:#000;"></div>
<div style="left:1264px;top:763px;width:14px;height:1px;background:#808080;"></div>
<div style="left:1277px;top:696px;width:1px;height:68px;background:#808080;"></div>
<div style="left:1263px;top:765px;width:16px;height:16px;background:#d4d0c8;"></div>
<div style="left:1264px;top:766px;width:14px;height:1px;background:#fff;"></div>
<div style="left:1264px;top:766px;width:1px;height:14px;background:#fff;"></div>
<div style="left:1263px;top:780px;width:16px;height:1px;background:#404040;"></div>
<div style="left:1278px;top:765px;width:1px;height:16px;background:#404040;"></div>
<div style="left:1264px;top:779px;width:14px;height:1px;background:#808080;"></div>
<div style="left:1277px;top:766px;width:1px;height:14px;background:#808080;"></div>
<svg style="left:1267px;top:771px" width="8" height="5"><path d="M0 0H7L3.5 3.5Z" fill="#808080"/><path d="M4 4L7.5 0.5" stroke="#fff" stroke-width="1"/></svg>
<div style="left:1px;top:782px;width:637px;height:17px;background:#d4d0c8;"></div>
<div style="left:1px;top:782px;width:637px;height:1px;background:#808080;"></div>
<div style="left:1px;top:782px;width:1px;height:17px;background:#808080;"></div>
<div style="left:637px;top:782px;width:1px;height:17px;background:#fff;"></div>
<div style="left:643px;top:782px;width:636px;height:17px;background:#d4d0c8;"></div>
<div style="left:643px;top:782px;width:636px;height:1px;background:#808080;"></div>
<div style="left:643px;top:782px;width:1px;height:17px;background:#808080;"></div>
<div style="left:1278px;top:782px;width:1px;height:17px;background:#fff;"></div>
<span class="s" style="left:5px;top:785px;color:#000;transform:scaleX(0.98);transform-origin:0 0">Broadcom 802.11g h?l?zati adapter (Microsoft&#x27;s Packet Scheduler) : &lt;live capture in progress&gt; File: C:\DOCUME~1\Janika\LOCA...</span>
<span class="s" style="left:647px;top:785px;color:#000;">P: 59770 D: 24 M: 0</span>
<svg style="left:1266px;top:786px" width="12" height="12"><path d="M11 1L1 11M11 5L5 11M11 9L9 11" stroke="#808080" stroke-width="1.5"/><path d="M11 2.5L2.5 11M11 6.5L6.5 11" stroke="#fff" stroke-width="0.8"/></svg>
</body></html>
